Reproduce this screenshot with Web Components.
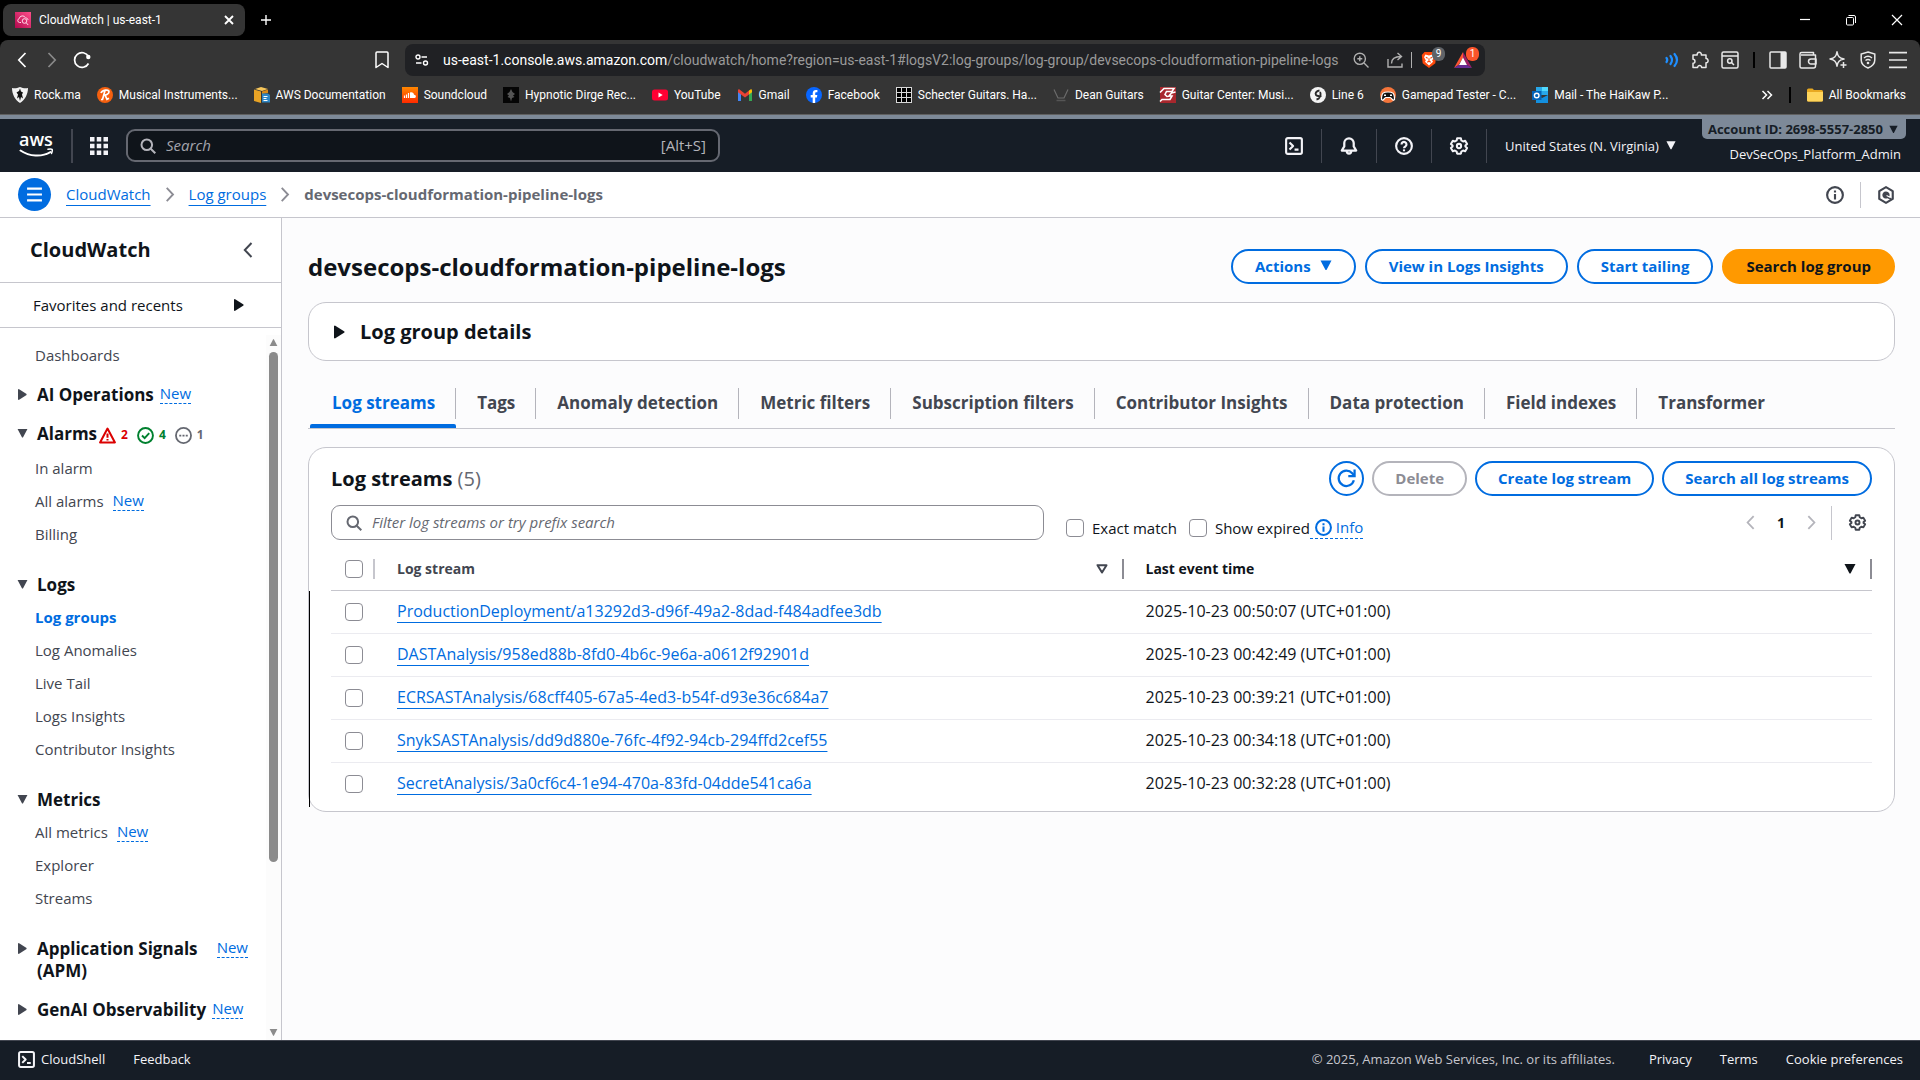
<!DOCTYPE html>
<html lang="en">
<head>
<meta charset="utf-8">
<title>CloudWatch | us-east-1</title>
<style>
html, body { margin: 0; height: 100%; }
body { font: 15px/22px "Open Sans", "Noto Sans", sans-serif; color: #0f141a; background: #fcfcfd; overflow: hidden; }
</style>
</head>
<body>
<console-window></console-window>
<script>
const BASE = `*{box-sizing:border-box}
a{color:#006ce0}
button{font:inherit;color:inherit;background:none;border:0;padding:0;margin:0;display:inline-flex;align-items:center;cursor:pointer}
ui-icon{flex:none}`;

function element(name, css, html) {
  customElements.define(name, class extends HTMLElement {
    connectedCallback() {
      if (this.shadowRoot) return;
      const t = document.createElement('template');
      t.innerHTML = `<style>${BASE}${css}</style>${typeof html === 'function' ? html(this) : html}`;
      this.attachShadow({ mode: 'open' }).append(t.content.cloneNode(true));
    }
  });
}

/* Each icon: [viewBox, markup]. Strokes take the current colour. */
const L = 'fill="none" stroke="currentColor"';
const ICONS = {
  search: ['0 0 16 16', `<g ${L} stroke-width="2"><circle cx="6.8" cy="6.8" r="5.3"/><path d="M10.7 10.7l4.6 4.6"/></g>`],
  gear: ['0 0 16 16', `<g ${L} stroke-width="1.8" stroke-linejoin="round"><path d="M6.3 1.2h3.4l.4 1.9 1.5.9 1.9-.6 1.7 2.9-1.5 1.3v.8l1.5 1.3-1.7 2.9-1.9-.6-1.5.9-.4 1.9H6.3l-.4-1.9-1.5-.9-1.9.6L.8 9.7l1.5-1.3v-.8L.8 6.3l1.7-2.9 1.9.6 1.5-.9z"/><circle cx="8" cy="8" r="1.9"/></g>`],
  bell: ['0 0 16 16', `<g ${L} stroke-width="2" stroke-linejoin="round"><path d="M8 1.2a4.2 4.2 0 0 0-4.2 4.2v3L1.6 12h12.8l-2.2-3.6v-3A4.2 4.2 0 0 0 8 1.2z"/><path d="M6 12.5c0 3 4 3 4 0"/></g>`],
  help: ['0 0 16 16', `<g ${L} stroke-width="1.9"><circle cx="8" cy="8" r="7"/><path d="M5.8 6.6a2.2 2.2 0 1 1 3.4 1.8C8.3 8.9 8 9.2 8 10"/><path d="M8 11v1.7"/></g>`],
  shell: ['0 0 16 16', `<g ${L} stroke-width="1.9" stroke-linejoin="round"><rect x="1" y="1" width="14" height="14" rx="1.5"/><path d="M4 4.8L7.2 8 4 11.2M8.5 11.2h3.5"/></g>`],
  apps: ['0 0 16 16', `<g fill="currentColor"><path d="M0 0h4v4H0zM6 0h4v4H6zM12 0h4v4h-4zM0 6h4v4H0zM6 6h4v4H6zM12 6h4v4h-4zM0 12h4v4H0zM6 12h4v4H6zM12 12h4v4h-4z"/></g>`],
  info: ['0 0 16 16', `<g ${L} stroke-width="1.9"><circle cx="8" cy="8" r="7"/><path d="M8 7v5M8 4v1.8"/></g>`],
  hex: ['0 0 16 16', `<g ${L} stroke-width="1.9" stroke-linejoin="round"><path d="M8 1l6 3.5v7L8 15l-6-3.5v-7z"/></g><path d="M8 4.8a3.2 3.2 0 1 0 1.3 6.1l2.9 1.6.8-1.4-2.3-1.3A3.2 3.2 0 0 0 8 4.8z" fill="currentColor"/><path d="M8.5 8.5l3 1.6" stroke="#fff" stroke-width="1"/>`],
  left: ['0 0 10 16', `<path d="M8.5 1L1.8 8l6.7 7" ${L} stroke-width="2"/>`],
  right: ['0 0 10 16', `<path d="M1.5 1l6.7 7-6.7 7" ${L} stroke-width="2"/>`],
  thinleft: ['0 0 10 16', `<path d="M8.5 1L1.8 8l6.7 7" ${L} stroke-width="1.7"/>`],
  thinright: ['0 0 10 16', `<path d="M1.5 1l6.7 7-6.7 7" ${L} stroke-width="1.7"/>`],
  down: ['0 0 12 10', `<path d="M.5 0h11L6.5 9.5h-1z" fill="currentColor"/>`],
  play: ['0 0 10 12', `<path d="M0 .5L.8 0 9.5 5.5v1L.8 12 0 11.5z" fill="currentColor"/>`],
  sort: ['0 0 12 10', `<path d="M1.5 1.2h9L6 8.5z" ${L} stroke-width="2" stroke-linejoin="round"/>`],
  refresh: ['0 0 16 16', `<g ${L} stroke-width="1.9"><path d="M14.2 9.5A6.5 6.5 0 1 1 12.8 3.5L14.5 5.5"/><path d="M14.8 .5v5.5H9.5"/></g>`],
  alarm: ['0 0 16 16', `<g ${L} stroke-width="1.9" stroke-linejoin="round"><path d="M8 1.5L15 14.5H1z"/><path d="M8 6v4M8 11.2v1.6"/></g>`],
  ok: ['0 0 16 16', `<g ${L} stroke-width="1.8"><circle cx="8" cy="8" r="7"/><path d="M4.7 8l2.5 2.5 4.3-4.7"/></g>`],
  pending: ['0 0 16 16', `<circle cx="8" cy="8" r="7.1" ${L} stroke-width="1.7"/><path d="M4 7.2h1.9V9H4zM7.05 7.2h1.9V9h-1.9zM10.1 7.2H12V9h-1.9z" fill="currentColor"/>`],
  burger: ['0 0 16 16', `<path d="M1 2.5h14M1 8h14M1 13.5h14" ${L} stroke-width="2"/>`],
  thinburger: ['0 0 16 16', `<path d="M0 1.5h16M0 8h16M0 14.5h16" ${L} stroke-width="1.5"/>`],
  close: ['0 0 12 12', `<path d="M2 2l8 8M10 2l-8 8" ${L} stroke-width="1.9"/>`],
  wclose: ['0 0 12 12', `<path d="M1 1l10 10M11 1L1 11" ${L} stroke-width="1.2"/>`],
  plus: ['0 0 12 12', `<path d="M6 1v10M1 6h10" ${L} stroke-width="1.4"/>`],
  minimise: ['0 0 12 12', `<path d="M1 5.5h10" ${L} stroke-width="1.2"/>`],
  restore: ['0 0 12 12', `<g ${L}><rect x="1.5" y="3.5" width="7" height="7.5" rx="1"/><path d="M3.5 1.5h5.5a1.5 1.5 0 0 1 1.5 1.5v6"/></g>`],
  reload: ['0 0 18 18', `<path d="M15.5 5.5A7.4 7.4 0 1 0 15.5 12.5" ${L} stroke-width="1.7"/><circle cx="15.3" cy="6" r="2.2" fill="currentColor"/>`],
  bookmark: ['0 0 14 18', `<path d="M1 2a1 1 0 0 1 1-1h10a1 1 0 0 1 1 1v14.5L7 12.5l-6 4z" ${L} stroke-width="1.5" stroke-linejoin="round"/>`],
  tune: ['0 0 14 12', `<g ${L} stroke-width="1.4"><circle cx="3" cy="3" r="2"/><path d="M6.5 3H12M1 9h5.5"/><circle cx="10.5" cy="9" r="2"/></g>`],
  zoom: ['0 0 16 16', `<g ${L} stroke-width="1.4"><circle cx="6.8" cy="6.8" r="5.6"/><path d="M11 11l4.5 4.5M4.3 6.8h5M6.8 4.3v5"/></g>`],
  share: ['0 0 16 16', `<g ${L} stroke-width="1.4"><path d="M1 7v8h14v-3.5M4.5 11.5c0-5 3-7 9.5-7M10.5 1l4 3.5-4 3.5"/></g>`],
  waves: ['0 0 14 16', `<g ${L} stroke-width="2.2" stroke-linecap="round"><path d="M1.5 6q1.500 2 0 4M5.5 4q3 4 0 8M9.5 2q5 6 0 12"/></g>`],
  puzzle: ['0 0 18 18', `<path d="M2 4h4.2c-.6-3.6 4.6-3.6 4.2 0H15v3.6c2.8-.4 2.8 4.6 0 4.2V16.5h-4.4c.2-2.6-4-2.6-4 0H2v-4.2c2.6.2 2.6-4 0-4z" ${L} stroke-width="1.5" stroke-linejoin="round"/>`],
  findpage: ['0 0 18 18', `<g ${L} stroke-width="1.5"><rect x="1" y="1" width="16" height="16" rx="1.5"/><path d="M1 5h16"/><circle cx="8.8" cy="10" r="2.2"/><path d="M10.5 11.5L13 14"/></g>`],
  panel: ['0 0 18 18', `<rect x="1" y="1" width="16" height="16" rx="1" ${L} stroke-width="1.5"/><path d="M11.5 1H17v16h-5.5z" fill="currentColor"/>`],
  wallet: ['0 0 18 18', `<g ${L} stroke-width="1.5" stroke-linejoin="round"><path d="M14.5 4V1.5H2.5A1.5 1.5 0 0 0 1 3v12.5A1.5 1.5 0 0 0 2.5 17h12a2 2 0 0 0 2-2V4H2"/><path d="M17 8h-5a2.5 2.5 0 0 0 0 5h5z"/></g>`],
  sparkle: ['0 0 18 18', `<path d="M8 .8C8.8 5.5 10.3 7 15 8c-4.7 1-6.2 2.5-7 7.2C7.2 10.5 5.7 9 1 8 5.7 7 7.2 5.5 8 .8zM14.5 11v6M11.5 14h6" ${L} stroke-width="1.5" stroke-linejoin="round"/>`],
  vpn: ['0 0 16 18', `<g ${L} stroke-width="1.5"><path d="M8 1l6.8 2v6c0 4-3 6.5-6.8 8-3.8-1.5-6.8-4-6.8-8V3z"/><path d="M4 7c2.4-2 5.6-2 8 0M5.5 9.5c1.5-1.2 3.5-1.2 5 0"/></g><circle cx="8" cy="12" r="1.3" fill="currentColor"/>`],
  more: ['0 0 12 10', `<path d="M1.5 1l4 4-4 4M6.5 1l4 4-4 4" ${L} stroke-width="1.5"/>`],
  aws: ['0 0 36 26', `<text x="0" y="13" font-family="Open Sans" font-weight="600" font-size="18" fill="#fff">aws</text><g fill="none" stroke="#fff" stroke-linecap="round"><path d="M1.5 17.5c9 6 21 7 30 1.5" stroke-width="2"/><path d="M29 16.3c4-.8 5.5-.3 3.5 4.2" stroke-width="1.5"/></g>`],
  /* site icons */
  cloudwatch: ['0 0 16 16', `<defs><linearGradient id="g" x1="0" y1="1" x2="1" y2="0"><stop stop-color="#b0084d"/><stop offset="1" stop-color="#ff4f8b"/></linearGradient></defs><path d="M0 0h16v16H0z" fill="url(#g)"/><g fill="none" stroke="#ffd9e8"><path d="M6 10.5H4.5a2 2 0 0 1-.3-3.9 3.3 3.3 0 0 1 6.3-.7"/><circle cx="9.5" cy="9" r="2.3"/><path d="M11.2 10.7l2 2.3M11 6c1.3 0 2 1 2 2"/></g>`],
  lion: ['0 0 18 20', `<path d="M4 1h10l3 3.5-1 9L9 19l-7-5.5-1-9z" fill="#ff4a0c"/><path d="M5 4l4 1 4-1 1.5 3-2 3.5 1 1.5L9 16l-4.5-4 1-1.5-2-3.5z" fill="#fff"/><path d="M5.5 7l2 1M12.5 7l-2 1M9 8v3M7 12.5l2-1.2 2 1.2" stroke="#ff4a0c" fill="none" stroke-width="1.2"/>`],
  bat: ['0 0 18 16', `<path d="M9 0v6L4.5 13 0 16z" fill="#ff5533"/><path d="M9 0l9 16-5-3L9 6z" fill="#9e1f63"/><path d="M0 16l4.5-3h8.5l5 3z" fill="#662d91"/><path d="M9 5.5l4 7.5H5z" fill="#fff"/>`],
  rock: ['0 0 16 16', `<path d="M8 0c3 1.5 6 1.5 8 1 0 6-3 12-8 15C3 13 0 7 0 1c2 .5 5 .5 8-1z" fill="#f2f2f2"/><path d="M8 1.5l1 3 2 1-1 2 1 4-2-1.5-1 4-1-4L5 11.5l1-4-1.5-2L7 4z" fill="#111"/>`],
  reverb: ['0 0 16 16', `<circle cx="8" cy="8" r="8" fill="#f5600f"/><path d="M4 6c1-3 8-4 8-1.3C12 7 9 8 7.5 8M8 3.5L5.5 12.5H4M8 8l2 4.3 2-1" fill="none" stroke="#fff" stroke-width="1.7"/>`],
  docs: ['0 0 16 16', `<path d="M7 0l7 2-6 2-7-2z" fill="#f7c65a"/><path d="M0 2.5l7 2V16l-7-2z" fill="#e8a325"/><path d="M8 4.5l6-2V6L8 7z" fill="#d98a17"/><path d="M8 6.5h6l2 1.5v7.5H8z" fill="#2e86c4"/><path d="M9.5 9.5h4M9.5 11.5h3M9.5 13.5h4" stroke="#fff"/>`],
  sound: ['0 0 16 16', `<defs><linearGradient id="s" x2="0" y2="1"><stop stop-color="#ff8800"/><stop offset="1" stop-color="#ff2a00"/></linearGradient></defs><path d="M0 0h16v16H0z" fill="url(#s)"/><path d="M2.5 8.5v2.5M4.5 7.5V11M6.5 6v5" stroke="#fff" stroke-width="1.2"/><path d="M8 5.5c2-1 4 .5 4 2.3 2-.5 2.8 3.2.5 3.2H8z" fill="#fff"/>`],
  dirge: ['0 0 16 16', `<path d="M0 0h16v16H0z" fill="#050505"/><path d="M8 2l1.5 3L12 7l-2 1.5 1.5 1.5L9 11l-1 3.5L7 11l-2.5-1L6 8.5 4 7l2.5-2z" fill="#555"/>`],
  youtube: ['0 0 16 16', `<rect y="2.5" width="16" height="11" rx="2.5" fill="#ff0033"/><path d="M6.5 5.5v5L10.7 8z" fill="#fff"/>`],
  gmail: ['0 0 16 16', `<path d="M1 14V4l3 2.3V14z" fill="#4285f4"/><path d="M12 14V6.3L15 4v10z" fill="#34a853"/><path d="M12 3.5l1.5-1c.8-.4 1.5.2 1.5 1.2v1.5l-3 2.3z" fill="#fbbc04"/><path d="M1 5.2V3.7c0-1 .7-1.6 1.5-1.2L8 6.7l4-3.2v4l-4 3-7-5.3z" fill="#ea4335"/>`],
  facebook: ['0 0 16 16', `<circle cx="8" cy="8" r="8" fill="#0866ff"/><path d="M6.7 16v-5.5h-2V8h2V6.6C6.7 4 8 3 10 3c.6 0 1 0 1.4.1v2.2h-1C9.5 5.3 9.2 5.8 9.2 6.6V8h2.1l-.4 2.5H9.2V16z" fill="#fff"/>`],
  schecter: ['0 0 16 16', `<path d="M0 0h16v16H0z" fill="#000"/><path d="M.5 0v16M5.5 0v16M10.5 0v16M15.5 0v16M0 .5h16M0 5.5h16M0 10.5h16M0 15.5h16" stroke="#d8d8d8"/>`],
  dean: ['0 0 16 16', `<path d="M1 2.5l4 8.5h6l4-8.5" fill="none" stroke="#6c6c6c" stroke-width="1.2"/><path d="M3.5 13.5h9" stroke="#555" stroke-width="1.5"/>`],
  gcenter: ['0 0 16 16', `<path d="M0 0h16v16H0z" fill="#a8272d"/><path d="M0 5.5L4 1.5h10l-2 3H6.5L5 7.5 7 9.5l3-.5M15.5 5l-4 1-2.5 3h3l-2 3.5H2l-2 2" fill="none" stroke="#fff" stroke-width="1.6"/>`],
  line6: ['0 0 16 16', `<circle cx="8" cy="8" r="8" fill="#f4f4f4"/><path d="M9.5 3.5C6 4 5 6.5 6 8c1.5 1.5 4 .5 3.5 2.5-.5 1.5-3 2-3 2M10 5c1.5 2-.5 3 1 5" fill="none" stroke="#2a2a2a" stroke-width="1.9"/>`],
  gamepad: ['0 0 16 16', `<circle cx="8" cy="8" r="8" fill="#f5753a"/><path d="M1.5 12.5c0-7 2-7.5 6.5-7.5s6.5.5 6.5 7.5c-2 2-3-2-4.5-2H6c-1.5 0-2.5 4-4.5 2z" fill="#111" stroke="#fff" stroke-width="1.2"/><path d="M4 8.2h2M10 8.2h2" stroke="#fff" stroke-width="1.5"/>`],
  outlook: ['0 0 16 16', `<path d="M4 0h12v8H4z" fill="#28a8ea"/><path d="M10 0h6v4h-6z" fill="#50d9ff"/><path d="M4 8l6 3 6-3v8H4z" fill="#1490df"/><path d="M0 4h9.5v9H0z" fill="#0364b8"/><circle cx="4.7" cy="8.5" r="2.3" fill="none" stroke="#fff" stroke-width="1.4"/>`],
  folder: ['0 0 16 16', `<path d="M0 3a1.5 1.5 0 0 1 1.5-1.5H5.5l1.5 1.5h7.5A1.5 1.5 0 0 1 16 4.5v8.5a1.5 1.5 0 0 1-1.5 1.5h-13A1.5 1.5 0 0 1 0 13z" fill="#e8a922"/><path d="M0 5h16v8a1.5 1.5 0 0 1-1.5 1.5h-13A1.5 1.5 0 0 1 0 13z" fill="#fed55c"/>`]
};
element('ui-icon', `:host{display:inline-flex;width:var(--w,18px);height:var(--h,18px)}svg{display:block;width:100%;height:100%;overflow:visible}`,
  el => { const [box, body] = ICONS[el.getAttribute('name')]; return `<svg viewBox="${box}" aria-hidden="true">${body}</svg>`; });

/* ---------- browser frame ---------- */
element('tab-strip', `:host{display:flex;height:40px;background:#000;color:#fff;font:12px/16px Roboto,sans-serif;align-items:center;padding:0 17px 0 3px}
.tab{display:flex;align-items:center;width:242px;height:32px;border-radius:8px;background:#353535;padding:0 10px 0 12px;gap:8px}
.tab span{flex:1} .new{margin-left:15px} .win{margin-left:auto;display:flex;gap:34px}
.site{--w:16px;--h:16px}.sm{--w:12px;--h:12px}`,
`<div class="tab"><ui-icon class="site" name="cloudwatch"></ui-icon><span>CloudWatch | us-east-1</span><button aria-label="Close tab"><ui-icon class="sm" name="close"></ui-icon></button></div>
<button class="new" aria-label="New tab"><ui-icon class="sm" name="plus"></ui-icon></button>
<div class="win"><button aria-label="Minimise"><ui-icon class="sm" name="minimise"></ui-icon></button><button aria-label="Restore"><ui-icon class="sm" name="restore"></ui-icon></button><button aria-label="Close"><ui-icon class="sm" name="wclose"></ui-icon></button></div>`);

element('address-row', `:host{display:flex;height:40px;align-items:center;color:#fff;font:14px/20px Roboto,sans-serif}
.left{width:405px;display:flex;align-items:center;padding:0 16px 0 17px}
.chev{--w:10px;--h:16px}.dim{color:#8a8a8a;margin:0 16px 0 20px}.bm{--w:14px;--h:18px;margin-left:auto}
.url{flex:1;min-width:0;display:flex;align-items:center;height:32px;background:#202124;border-radius:8px;padding:0 5px 0 10px}
.text{flex:1;min-width:0;margin:0 0 0 14px;white-space:nowrap;color:#9a9a9a}.text b{font-weight:400;color:#fff}
.tune{--w:14px;--h:12px}.g{color:#b0b0b0;--w:16px;--h:16px}
.tools{display:flex;align-items:center;gap:18px}.bar{width:1px;height:16px;background:#b0b0b0;margin-left:-10px}
.badge{position:relative;width:26px;height:32px;display:flex;align-items:center;margin-left:8px}.badge i{position:absolute;left:12px;top:3px;width:13px;height:14px;border-radius:6px;background:#5f6368;font:10px/14px Roboto,sans-serif;text-align:center;color:#fff}.badge .red{background:#fb542b}
.right{width:435px;display:flex;justify-content:flex-end;align-items:center;gap:12px;padding-right:13px;color:#e8e8e8}
.sep{width:2px;height:16px;background:#000;margin:0 2px}
.wave{color:#1f8fff;--w:14px;--h:16px}`,
`<div class="left"><button aria-label="Back"><ui-icon class="chev" name="thinleft"></ui-icon></button><button class="dim" aria-label="Forward"><ui-icon class="chev" name="thinright"></ui-icon></button><button aria-label="Reload"><ui-icon name="reload"></ui-icon></button><button class="bm" aria-label="Bookmark"><ui-icon name="bookmark"></ui-icon></button></div>
<div class="url"><ui-icon class="tune" name="tune"></ui-icon><div class="text" role="textbox" aria-label="Address"><b>us-east-1.console.aws.amazon.com</b>/cloudwatch/home?region=us-east-1#logsV2:log-groups/log-group/devsecops-cloudformation-pipeline-logs</div>
<div class="tools"><ui-icon class="g" name="zoom"></ui-icon><ui-icon class="g" name="share"></ui-icon><span class="bar"></span></div>
<span class="badge"><ui-icon name="lion"></ui-icon><i>9</i></span><span class="badge"><ui-icon name="bat"></ui-icon><i class="red">1</i></span></div>
<div class="right"><ui-icon class="wave" name="waves"></ui-icon><ui-icon name="puzzle"></ui-icon><ui-icon name="findpage"></ui-icon><span class="sep"></span><ui-icon name="panel"></ui-icon><ui-icon name="wallet"></ui-icon><ui-icon name="sparkle"></ui-icon><ui-icon name="vpn"></ui-icon><ui-icon name="thinburger"></ui-icon></div>`);

element('bookmark-link', `:host{display:block;--w:16px;--h:16px}a{display:flex;align-items:center;gap:6px;color:#fff;text-decoration:none;white-space:nowrap}`,
  el => `<a href="#"><ui-icon name="${el.getAttribute('icon')}"></ui-icon><slot></slot></a>`);

element('bookmark-bar', `:host{display:flex;height:34px;padding:0 14px 4px 12px;align-items:center;gap:16px;color:#fff;font:12px/16px Roboto,sans-serif}
.more{margin-left:auto;--w:12px;--h:10px}.sep{width:2px;height:16px;background:#000}`,
`<bookmark-link icon="rock">Rock.ma</bookmark-link><bookmark-link icon="reverb">Musical Instruments...</bookmark-link><bookmark-link icon="docs">AWS Documentation</bookmark-link><bookmark-link icon="sound">Soundcloud</bookmark-link><bookmark-link icon="dirge">Hypnotic Dirge Rec...</bookmark-link><bookmark-link icon="youtube">YouTube</bookmark-link><bookmark-link icon="gmail">Gmail</bookmark-link><bookmark-link icon="facebook">Facebook</bookmark-link><bookmark-link icon="schecter">Schecter Guitars. Ha...</bookmark-link><bookmark-link icon="dean">Dean Guitars</bookmark-link><bookmark-link icon="gcenter">Guitar Center: Musi...</bookmark-link><bookmark-link icon="line6">Line 6</bookmark-link><bookmark-link icon="gamepad">Gamepad Tester - C...</bookmark-link><bookmark-link icon="outlook">Mail - The HaiKaw P...</bookmark-link>
<button class="more" aria-label="More bookmarks"><ui-icon name="more"></ui-icon></button><span class="sep"></span><bookmark-link icon="folder">All Bookmarks</bookmark-link>`);

element('browser-frame', `:host{display:block;background:#000;flex:none}.bars{background:#353535;border-radius:8px 8px 0 0;border-bottom:1px solid #606060}`,
`<tab-strip></tab-strip><div class="bars"><address-row></address-row><bookmark-bar></bookmark-bar></div>`);

/* ---------- console header ---------- */
element('console-header', `:host{display:flex;flex:none;height:57px;border-top:4px solid #7d8998;background:#161d26;color:#f3f3f7;align-items:center;font-size:13px;line-height:18px;padding:0 14px 0 19px}
.logo{--w:36px;--h:26px;display:flex}.bar{width:1px;height:34px;background:#424650}.first{width:2px;margin:0 17px 0 16px}
.search{display:flex;align-items:center;width:594px;height:33px;border:2px solid #656871;border-radius:9px;background:#0f141a;padding:0 12px;gap:10px;font-size:15px;color:#b4b4bb;margin-left:18px}
.search ui-icon{--w:16px;--h:16px}.search span{padding-bottom:2px}
input{flex:1;min-width:0;background:none;border:0;outline:0;font:inherit;color:#fff;padding:0 0 2px}input::placeholder{color:#a4a4ad;font-style:italic;opacity:1}
.icons{margin-left:auto;display:flex;align-items:center;gap:18px}
.region{gap:7px;margin-left:18px}.region ui-icon{--w:10px;--h:9px}
.acct{align-self:stretch;margin-left:26px;display:flex;flex-direction:column;align-items:flex-end}
.id{background:#7d8998;color:#161d26;font-weight:700;height:20px;border-radius:0 0 5px 5px;padding:0 8px 0 6px;gap:6px}.id ui-icon{--w:9px;--h:9px}
.role{padding:6px 5px 0 0}`,
`<a class="logo" href="#" aria-label="AWS home"><ui-icon name="aws"></ui-icon></a><span class="bar first"></span><button aria-label="Services"><ui-icon name="apps"></ui-icon></button>
<div class="search"><ui-icon name="search"></ui-icon><input type="search" placeholder="Search" aria-label="Search"><span>[Alt+S]</span></div>
<div class="icons"><button aria-label="CloudShell"><ui-icon name="shell"></ui-icon></button><span class="bar"></span><button aria-label="Notifications"><ui-icon name="bell"></ui-icon></button><span class="bar"></span><button aria-label="Help"><ui-icon name="help"></ui-icon></button><span class="bar"></span><button aria-label="Settings"><ui-icon name="gear"></ui-icon></button><span class="bar"></span></div>
<button class="region">United States (N. Virginia)<ui-icon name="down"></ui-icon></button>
<div class="acct"><button class="id">Account ID: 2698-5557-2850<ui-icon name="down"></ui-icon></button><span class="role">DevSecOps_Platform_Admin</span></div>`);

element('crumb-bar', `:host{display:flex;flex:none;height:46px;background:#fff;border-bottom:1px solid #c6c6cd;align-items:center;padding:0 25px 0 18px}
.menu{width:33px;height:33px;border-radius:50%;background:#006ce0;color:#fff;justify-content:center;--w:17px;--h:17px}
nav{display:flex;align-items:center;gap:14px;margin-left:15px;color:#8c8c94;--w:10px;--h:15px}
a,b{padding-bottom:2px}
a{text-underline-offset:5px;text-decoration-skip-ink:none}b{font-weight:700;color:#656871}
.right{margin-left:auto;display:flex;align-items:center;gap:16px;color:#424650}.bar{width:1px;height:26px;background:#c6c6cd}`,
`<button class="menu" aria-label="Open navigation"><ui-icon name="burger"></ui-icon></button>
<nav aria-label="Breadcrumbs"><a href="#">CloudWatch</a><ui-icon name="right"></ui-icon><a href="#">Log groups</a><ui-icon name="right"></ui-icon><b>devsecops-cloudformation-pipeline-logs</b></nav>
<div class="right"><button aria-label="Info"><ui-icon name="info"></ui-icon></button><span class="bar"></span><button aria-label="Assistant"><ui-icon name="hex"></ui-icon></button></div>`);

/* ---------- side navigation ---------- */
element('new-tag', `:host{display:inline-flex;flex:none}button{color:#006ce0;line-height:19px;border-bottom:1px dashed #006ce0;font-size:15px;font-weight:400}`, `<button>New</button>`);
element('nav-item', `:host{display:flex;height:33px;align-items:center;padding:0 0 3px 35px;gap:9px}a{color:#424650;text-decoration:none}:host([active]) a{color:#006ce0;font-weight:700}`,
  el => `<a href="#"><slot></slot></a>${el.hasAttribute('new') ? '<new-tag></new-tag>' : ''}`);
element('nav-group', `:host{display:block;margin-top:17px}:host([after]){margin-top:22px}
.head{display:flex;align-items:flex-start;gap:9px;padding:0 18px;font-size:17px;font-weight:700}
.head ui-icon{--w:9px;--h:11px;color:#424650;margin:5px 1px 0 0}.head ui-icon[name=down]{--w:11px;--h:9px;margin:6px 0 0 -1px}
.title{font-weight:700;text-align:left;align-items:flex-start;flex:0 1 auto}
.items{padding-top:6px}:host(:not([open])) .items{display:none}
.name{display:flex;gap:6px;align-items:flex-start}`,
  el => `<div class="head"><ui-icon name="${el.hasAttribute('open') ? 'down' : 'play'}"></ui-icon><div class="name"><button class="title">${el.getAttribute('title-text')}</button><slot name="extra"></slot></div></div><div class="items"><slot></slot></div>`);
element('alarm-counts', `:host{display:flex;align-items:center;gap:5px;height:24px;font-size:12px;font-weight:700;margin-left:-4px;--w:17px;--h:17px}
span+ui-icon{margin-left:4px}.r{color:#db0000}.g{color:#00802f}.p{color:#656871}`,
`<ui-icon class="r" name="alarm"></ui-icon><span class="r">2</span><ui-icon class="g" name="ok"></ui-icon><span class="g">4</span><ui-icon class="p" name="pending"></ui-icon><span class="p">1</span>`);
element('scroll-rail', `:host{display:flex;flex-direction:column;align-items:center;flex:none;width:15px;background:#fcfcfc;padding:4px 0;color:#8b8b8b;margin-top:7px;--w:9px;--h:7px}
.up{transform:rotate(180deg)}.track{flex:1;width:9px;margin:6px 0;display:flex;flex-direction:column}.thumb{height:76%;border-radius:5px;background:#8b8b8b}`,
`<ui-icon class="up" name="down"></ui-icon><div class="track"><div class="thumb"></div></div><ui-icon name="down"></ui-icon>`);
element('side-nav', `:host{display:flex;flex-direction:column;flex:none;width:282px;background:#fff;border-right:1px solid #c6c6cd;min-height:0}
header{display:flex;justify-content:space-between;align-items:center;height:65px;border-bottom:1px solid #c6c6cd;padding:0 28px 0 30px;flex:none;color:#424650;--w:10px;--h:16px}
h2{margin:0;font-size:20px;line-height:28px;color:#0f141a}
.fav{display:flex;justify-content:space-between;height:45px;border-bottom:1px solid #c6c6cd;padding:0 37px 1px 33px;flex:none;width:100%;--w:10px;--h:12px}
.scroll{display:flex;flex:1;min-height:0}.list{flex:1;overflow:hidden;padding-top:12px}
nav-group:first-of-type{margin-top:11px}`,
`<header><h2>CloudWatch</h2><button aria-label="Close navigation"><ui-icon name="left"></ui-icon></button></header>
<button class="fav">Favorites and recents<ui-icon name="play"></ui-icon></button>
<div class="scroll"><nav class="list" aria-label="CloudWatch"><nav-item>Dashboards</nav-item>
<nav-group title-text="AI Operations"><new-tag slot="extra"></new-tag></nav-group>
<nav-group open title-text="Alarms"><alarm-counts slot="extra"></alarm-counts><nav-item>In alarm</nav-item><nav-item new>All alarms</nav-item><nav-item>Billing</nav-item></nav-group>
<nav-group open after title-text="Logs"><nav-item active>Log groups</nav-item><nav-item>Log Anomalies</nav-item><nav-item>Live Tail</nav-item><nav-item>Logs Insights</nav-item><nav-item>Contributor Insights</nav-item></nav-group>
<nav-group open after title-text="Metrics"><nav-item new>All metrics</nav-item><nav-item>Explorer</nav-item><nav-item>Streams</nav-item></nav-group>
<nav-group after title-text="Application Signals (APM)"><new-tag slot="extra"></new-tag></nav-group>
<nav-group title-text="GenAI Observability"><new-tag slot="extra"></new-tag></nav-group></nav><scroll-rail></scroll-rail></div>`);

/* ---------- main content ---------- */
element('pill-button', `:host{display:block;flex:none}button{height:35px;border:2px solid #006ce0;border-radius:18px;background:#fff;color:#006ce0;font-weight:700;padding:0 var(--pad,21px) 2px;gap:9px;white-space:nowrap;--w:12px;--h:11px}
:host([kind=primary]) button{background:#ff9900;border-color:#ff9900;color:#0f141a}
:host([kind=off]) button{color:#8c8c94;border-color:#b4b4bb;cursor:default}
:host([kind=round]) button{padding:0;width:35px;justify-content:center;--w:19px;--h:19px}`,
  el => `<button ${el.getAttribute('kind') === 'off' ? 'disabled' : ''} ${el.hasAttribute('label') ? `aria-label="${el.getAttribute('label')}"` : ''}><slot></slot></button>`);

element('detail-panel', `:host{display:block;margin-top:18px;border:1px solid #c6c6cd;border-radius:18px;background:#fff}
button{height:57px;width:100%;padding:0 25px;gap:15px;font-size:20px;font-weight:700;--w:11px;--h:14px}`, `<button aria-expanded="false"><ui-icon name="play"></ui-icon><slot></slot></button>`);

element('tab-list', `:host{display:flex;margin-top:19px;height:49px;border-bottom:1px solid #c6c6cd;align-items:stretch}
button{position:relative;padding:0 21px 2px;font-size:17px;font-weight:700;color:#424650;white-space:nowrap}
button:first-of-type{color:#006ce0;padding-left:24px}
button:not(:last-child)::after{content:"";position:absolute;right:0;top:8px;bottom:9px;width:1px;background:#b4b4bb}
button:first-of-type::before{content:"";position:absolute;left:2px;right:0;bottom:0;height:4px;border-radius:2px 2px 0 0;background:#006ce0}`,
  el => el.getAttribute('tabs').split('|').map(t => `<button role="tab">${t}</button>`).join(''));

const ROWS = [
  ['ProductionDeployment/a13292d3-d96f-49a2-8dad-f484adfee3db', '2025-10-23 00:50:07 (UTC+01:00)'],
  ['DASTAnalysis/958ed88b-8fd0-4b6c-9e6a-a0612f92901d', '2025-10-23 00:42:49 (UTC+01:00)'],
  ['ECRSASTAnalysis/68cff405-67a5-4ed3-b54f-d93e36c684a7', '2025-10-23 00:39:21 (UTC+01:00)'],
  ['SnykSASTAnalysis/dd9d880e-76fc-4f92-94cb-294ffd2cef55', '2025-10-23 00:34:18 (UTC+01:00)'],
  ['SecretAnalysis/3a0cf6c4-1e94-470a-83fd-04dde541ca6a', '2025-10-23 00:32:28 (UTC+01:00)']];
const BOX = `input[type=checkbox]{appearance:none;width:18px;height:18px;margin:0;border:1px solid #8c8c94;border-radius:4px;background:#fff;flex:none;display:block}`;

element('stream-table', `${BOX}:host{display:block;margin-top:8px}
table{width:100%;table-layout:fixed;border-collapse:separate;border-spacing:0}
th,td{height:43px;padding:0 22px 2px;text-align:left;vertical-align:middle;border-bottom:1px solid #ebebf0;font-size:16px}
th{border-color:#c6c6cd;font-size:14px;font-weight:700;padding:0 0 0 22px}
tr:last-child td{border-bottom-color:transparent}
th:first-child,td:first-child{width:44px;padding:0 0 0 14px}
.h{display:flex;align-items:center;justify-content:space-between;--w:12px;--h:10px}
.h::after{content:"";width:2px;height:20px;background:#8c8c94;margin-left:14px}.h.c::after{background:#c6c6cd;margin:0}
.h ui-icon{margin-left:auto}.grey{color:#424650}
a{text-underline-offset:5px;text-decoration-skip-ink:none}`,
`<table><thead><tr><th><div class="h c"><input type="checkbox" aria-label="Select all"></div></th><th><div class="h grey">Log stream<ui-icon name="sort"></ui-icon></div></th><th><div class="h">Last event time<ui-icon name="down"></ui-icon></div></th></tr></thead><tbody>${ROWS.map(([n, t]) => `<tr><td><input type="checkbox" aria-label="Select ${n}"></td><td><a href="#">${n}</a></td><td>${t}</td></tr>`).join('')}</tbody></table>`);

element('stream-card', `${BOX}:host{display:block;position:relative;margin-top:18px;border:1px solid #c6c6cd;border-radius:18px;background:#fff;padding:13px 22px 5px}
.edge{position:absolute;left:0;top:143px;bottom:4px;width:1px;background:#000}
.top{display:flex;align-items:center;gap:8px}h2{margin:0 auto 0 0;font-size:20px;line-height:28px}h2 span{color:#656871;font-weight:400}
.tools{display:flex;align-items:center;margin-top:9px;height:35px}
.filter{flex:0 1 713px;height:35px;border:1px solid #8c8c94;border-radius:9px;display:flex;align-items:center;gap:10px;padding:0 14px;color:#656871;--w:16px;--h:16px}
.filter input{flex:1;border:0;outline:0;background:none;font:inherit;padding:0 0 2px}.filter input::placeholder{font-style:italic;color:#656871;opacity:1}
.checks{align-self:flex-end;display:flex;align-items:center;gap:12px;margin-left:22px;padding-bottom:1px}
label{display:flex;align-items:center;gap:8px;white-space:nowrap}
.info{color:#006ce0;border-bottom:1px dashed #006ce0;gap:4px;padding-left:5px;margin-left:-12px;--w:17px;--h:17px}
.pages{margin-left:auto;display:flex;align-items:center;gap:22px;color:#b4b4bb;--w:9px;--h:15px}.pages b{color:#0f141a;font-size:14px}
.bar{width:1px;height:34px;background:#c6c6cd;margin:0 17px 0 15px}.gear{--w:17px;--h:17px;color:#424650;margin-right:6px}`,
`<div class="top"><h2>Log streams <span>(5)</span></h2><pill-button kind="round" label="Refresh"><ui-icon name="refresh"></ui-icon></pill-button><pill-button kind="off">Delete</pill-button><pill-button>Create log stream</pill-button><pill-button>Search all log streams</pill-button></div>
<div class="tools"><div class="filter"><ui-icon name="search"></ui-icon><input type="search" placeholder="Filter log streams or try prefix search" aria-label="Filter log streams"></div>
<div class="checks"><label><input type="checkbox">Exact match</label><label><input type="checkbox">Show expired</label><button class="info"><ui-icon name="info"></ui-icon>Info</button></div>
<div class="pages"><button aria-label="Previous page"><ui-icon name="left"></ui-icon></button><b>1</b><button aria-label="Next page"><ui-icon name="right"></ui-icon></button></div><span class="bar"></span><button class="gear" aria-label="Preferences"><ui-icon name="gear"></ui-icon></button></div>
<stream-table></stream-table><span class="edge"></span>`);

element('log-group-page', `:host{display:block;flex:1;min-width:0;padding:31px 25px 0 26px;overflow:hidden}
.head{display:flex;align-items:center;gap:9px;height:35px;--pad:22px}h1{margin:0 auto 0 0;font-size:24px;line-height:32px}`,
`<div class="head"><h1>devsecops-cloudformation-pipeline-logs</h1><pill-button>Actions<ui-icon name="down"></ui-icon></pill-button><pill-button>View in Logs Insights</pill-button><pill-button>Start tailing</pill-button><pill-button kind="primary">Search log group</pill-button></div>
<detail-panel>Log group details</detail-panel>
<tab-list role="tablist" tabs="Log streams|Tags|Anomaly detection|Metric filters|Subscription filters|Contributor Insights|Data protection|Field indexes|Transformer"></tab-list>
<stream-card></stream-card>`);

element('console-footer', `:host{display:flex;flex:none;height:40px;background:#161d26;border-top:1px solid #424650;color:#f3f3f7;align-items:center;font-size:13px;line-height:18px;padding:0 17px 3px 18px;gap:28px}
a{color:inherit;text-decoration:none}.sh{gap:6px;--w:17px;--h:17px}.copy{margin:0 6px 0 auto;color:#c6c6cd}`,
`<button class="sh"><ui-icon name="shell"></ui-icon>CloudShell</button><a href="#">Feedback</a><span class="copy">© 2025, Amazon Web Services, Inc. or its affiliates.</span><a href="#">Privacy</a><a href="#">Terms</a><a href="#">Cookie preferences</a>`);

element('console-window', `:host{display:flex;flex-direction:column;height:100vh}.body{display:flex;flex:1;min-height:0}`,
`<browser-frame></browser-frame><console-header></console-header><crumb-bar></crumb-bar><div class="body"><side-nav></side-nav><log-group-page></log-group-page></div><console-footer></console-footer>`);
</script>
</body>
</html>
